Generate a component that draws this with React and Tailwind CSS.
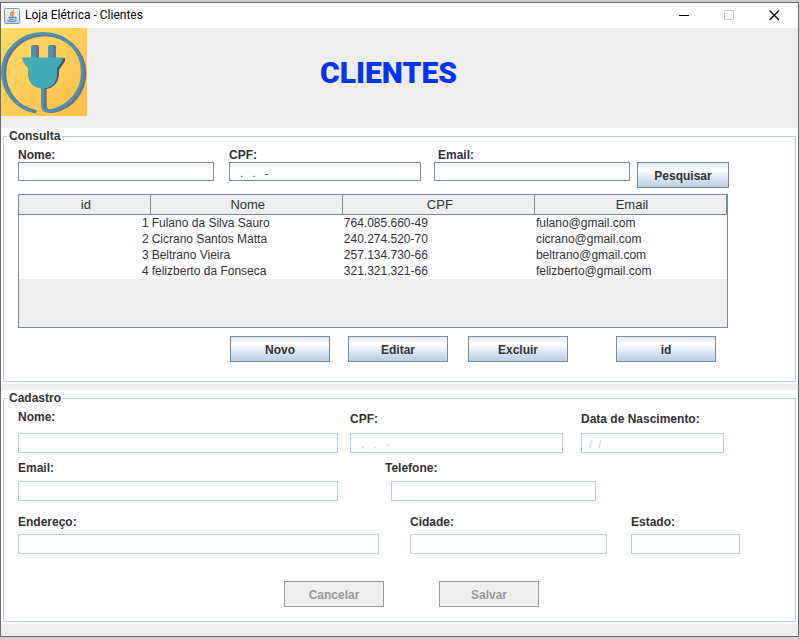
import React from "react";

const clients = [
  { id: 1, nome: "Fulano da Silva Sauro", cpf: "764.085.660-49", email: "fulano@gmail.com" },
  { id: 2, nome: "Cicrano Santos Matta", cpf: "240.274.520-70", email: "cicrano@gmail.com" },
  { id: 3, nome: "Beltrano Vieira", cpf: "257.134.730-66", email: "beltrano@gmail.com" },
  { id: 4, nome: "felizberto da Fonseca", cpf: "321.321.321-66", email: "felizberto@gmail.com" },
];

function JavaIcon() {
  return (
    <svg width="16" height="16" viewBox="0 0 16 16" aria-hidden="true">
      <defs>
        <linearGradient id="javaBg" x1="0" y1="0" x2="0" y2="1">
          <stop offset="0" stopColor="#fdfdfd" />
          <stop offset="1" stopColor="#c3d2dd" />
        </linearGradient>
      </defs>
      <rect x="0.5" y="0.5" width="15" height="15" rx="1" fill="url(#javaBg)" stroke="#7e93a5" />
      <path d="M9.5 2C9.8 3.8 6 4.6 6.4 6.3C6.6 7.2 7.6 7.6 7.6 8.6M10.6 4.6C8.6 5.2 8.2 6 8.8 6.8C9.3 7.5 9 8 8.6 8.6" fill="none" stroke="#e8751a" strokeWidth="1.3" />
      <path d="M4.5 9.4H10.5M5 11.2H10M10.8 9.3C12.8 8.8 12.6 10.8 10.8 11.2M3.4 12.4C4.5 13.6 10.5 13.6 12.4 12.6" fill="none" stroke="#4a7896" strokeWidth="1" />
    </svg>
  );
}

function PlugLogo() {
  return (
    <svg width="86" height="88" viewBox="0 0 86 88" role="img" aria-label="Loja Elétrica">
      <defs>
        <linearGradient id="logoBg" x1="0" y1="0" x2="1" y2="1">
          <stop offset="0" stopColor="#ffdb66" />
          <stop offset="1" stopColor="#ffbd4a" />
        </linearGradient>
      </defs>
      <rect width="86" height="88" fill="url(#logoBg)" />
      <g fill="none" strokeLinecap="round">
        <path d="M34 83.500C16 80 3.500 64 3.500 45C3.500 23 22 6.500 43.500 6.500C65 6.500 83.500 23 83.500 45C83.500 64 71 79 53 83C46 84 44 82 44 77V60" stroke="#776f70" strokeWidth="3.500" />
        <path d="M32 83C14 79 1.500 63 1.500 44C1.500 22 20 5.500 42 5.500C64 5.500 81.500 22 81.500 44C81.500 63 69 78 51 82.500C44 84 41.500 82 41.500 77V60" stroke="#4395bd" strokeWidth="3" />
      </g>
      <path d="M33 17H36Q38 17 38 19V30H33ZM50 17H53Q55 17 55 19V30H50Z" fill="#776f70" />
      <path d="M30 30V19Q30 17 32 17H33Q35 17 35 19V30ZM47 30V19Q47 17 49 17H50Q52 17 52 19V30Z" fill="#4395bd" />
      <path d="M24 30H64V33L58 42V46C58 54 52 61 44 61Z" fill="#514e5d" />
      <path d="M21 29.500H62Q62 34 56 40V46C56 55 50 60.500 42 60.500C33 60.500 27 55 27 46V40Q22 36 21 29.500Z" fill="#42abb8" />
    </svg>
  );
}

function Button({ className = "", ...props }) {
  return (
    <button
      type="button"
      className={`h-[26px] border border-[#7a8a99] bg-[linear-gradient(180deg,#dde8f3_0%,#ffffff_30%,#dde8f3_60%,#b8cfe5_100%)] pt-0.5 text-center font-bold leading-[14px] disabled:border-[#999999] disabled:bg-[#eeeeee] disabled:bg-none disabled:text-[#999999] ${className}`}
      {...props}
    />
  );
}

function Field({ id, label, className = "", labelClass = "", inputClass = "", disabled, value = "" }) {
  return (
    <div className={`flex min-w-0 flex-col justify-end ${className}`}>
      <label htmlFor={id} className={`whitespace-nowrap font-bold leading-[14px] ${labelClass}`}>
        {label}
      </label>
      <input
        id={id}
        type="text"
        defaultValue={value}
        disabled={disabled}
        className={`w-full border border-[#7a8a99] bg-white px-px pt-0.5 text-[11px] outline-none disabled:border-[#b8cfe5] disabled:text-[#b8cfe5] ${disabled ? "h-5" : "h-[19px]"} ${inputClass}`}
      />
    </div>
  );
}

function Panel({ title, className = "", children }) {
  return (
    <section className="bg-white px-0.5 py-0.5">
      <fieldset className={`min-w-0 border border-[#b8cfe5] px-3.5 ${className}`}>
        <legend className="-ml-[11px] px-0.5 font-bold leading-[13px]">{title}</legend>
        {children}
      </fieldset>
    </section>
  );
}

function TitleBar() {
  return (
    <div className="flex h-[25px] items-center bg-white pl-[3px] pr-[18px] text-black">
      <JavaIcon />
      <span className="ml-[5px] flex-1 pb-0.5 font-['Roboto',sans-serif] text-[12px] leading-4">
        Loja Elétrica - Clientes
      </span>
      <div className="flex items-center gap-[34px]">
        <button type="button" aria-label="Minimizar">
          <svg className="block" width="11" height="11" viewBox="0 0 11 11"><path d="M0 5.500H10" stroke="#000" /></svg>
        </button>
        <button type="button" aria-label="Maximizar" disabled>
          <svg className="block" width="11" height="11" viewBox="0 0 11 11"><path d="M0.500 0.500H9.500V9.500H0.500Z" fill="none" stroke="#c8c8c8" /></svg>
        </button>
        <button type="button" aria-label="Fechar">
          <svg className="block" width="11" height="11" viewBox="0 0 11 11"><path d="M0.500 0.500L10 10M10 0.500L0.500 10" stroke="#000" strokeWidth="1.200" /></svg>
        </button>
      </div>
    </div>
  );
}

function ClientTable() {
  const head = "border-b border-r border-[#7a8a99] p-0 pl-[3px] font-normal";
  return (
    <div className="mr-[53px] mt-1.5 h-[134px] border border-[#7a8a99] bg-[#eeeeee]">
      <table className="w-full table-fixed border-separate border-spacing-0">
        <colgroup>
          <col className="w-[18.6%]" />
          <col />
          <col />
          <col />
        </colgroup>
        <thead>
          <tr className="h-5 text-[13px] leading-[19px]">
            <th className={head}>id</th>
            <th className={head}>Nome</th>
            <th className={head}>CPF</th>
            <th className={head}>Email</th>
          </tr>
        </thead>
        <tbody className="bg-white">
          {clients.map((c) => (
            <tr key={c.id} className="h-4 leading-4">
              <td className="p-0 pr-0.5 text-right">{c.id}</td>
              <td className="p-0 pl-px">{c.nome}</td>
              <td className="p-0 pl-px">{c.cpf}</td>
              <td className="p-0 pl-px">{c.email}</td>
            </tr>
          ))}
        </tbody>
      </table>
    </div>
  );
}

export default function App() {
  return (
    <div className="flex min-h-screen flex-col bg-[#cfcfcf] pb-0.5 pr-px pt-0.5 font-['Liberation_Sans',Arial,sans-serif] text-[12px] text-[#333333]">
      <main className="flex flex-1 flex-col border border-[#6b6b6b] bg-[#eeeeee]">
        <TitleBar />
        <header className="flex h-[100px] items-start">
          <PlugLogo />
          <h1 className="flex-1 pr-[108px] pt-[25px] text-center font-['Roboto',sans-serif] text-[30px] font-black leading-10 text-[#0033ff]">
            CLIENTES
          </h1>
        </header>

        <Panel title="Consulta" className="pb-[19px] pt-[5px]">
          <div className="mr-[52px] flex items-start">
            <Field id="busca-nome" label="Nome:" className="flex-[196]" />
            <Field id="busca-cpf" label="CPF:" value="   .   .   -  " className="ml-[15px] flex-[192]" />
            <Field id="busca-email" label="Email:" labelClass="pl-1" className="ml-[13px] flex-[196]" />
            <Button className="ml-[7px] mt-3.5 w-[92px]">Pesquisar</Button>
          </div>
          <ClientTable />
          <div className="mr-[65px] mt-2 flex justify-end">
            <Button className="w-[100px]">Novo</Button>
            <Button className="ml-[18px] w-[100px]">Editar</Button>
            <Button className="ml-5 w-[100px]">Excluir</Button>
            <Button className="ml-12 w-[100px]">id</Button>
          </div>
        </Panel>

        <div className="h-1.5" />

        <Panel title="Cadastro" className="pb-3.5 pt-[5px]">
          <div className="mr-[57px] flex">
            <Field id="nome" label="Nome:" disabled labelClass="mb-[9px]" className="flex-[320]" />
            <Field id="cpf" label="CPF:" disabled value="   .   .   -  " labelClass="mb-[7px]" className="ml-3 flex-[213]" />
            <Field id="nascimento" label="Data de Nascimento:" disabled value="  /  /    " labelClass="mb-[7px]" className="ml-[18px] flex-[143]" />
          </div>
          <div className="mr-[185px] mt-2 flex">
            <Field id="email" label="Email:" disabled labelClass="mb-1.5" className="flex-[320]" />
            <Field id="telefone" label="Telefone:" disabled labelClass="mb-1.5 -ml-1.5" className="ml-[53px] flex-[205]" />
          </div>
          <div className="mr-[41px] mt-3.5 flex">
            <Field id="endereco" label="Endereço:" disabled labelClass="mb-[5px]" className="flex-[361]" />
            <Field id="cidade" label="Cidade:" disabled labelClass="mb-[5px]" className="ml-[31px] flex-[197]" />
            <Field id="estado" label="Estado:" disabled labelClass="mb-[5px]" className="ml-6 flex-[109]" />
          </div>
          <div className="ml-6 mt-[27px] flex justify-center gap-[55px]">
            <Button disabled className="w-[100px]">Cancelar</Button>
            <Button disabled className="w-[100px]">Salvar</Button>
          </div>
        </Panel>
      </main>
    </div>
  );
}
